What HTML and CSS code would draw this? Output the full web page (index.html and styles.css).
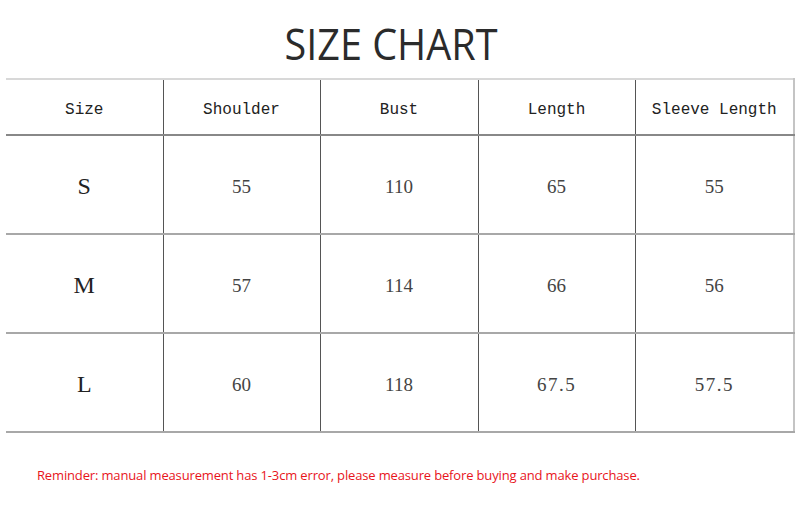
FILE: index.html
```html
<!DOCTYPE html>
<html>
<head>
<meta charset="utf-8">
<link rel="stylesheet" href="styles.css">
</head>
<body>
<div class="page">
  <h1 class="title">SIZE CHART</h1>
  <table class="chart">
    <colgroup>
      <col class="c1"><col class="c2"><col class="c3"><col class="c4"><col class="c5">
    </colgroup>
    <thead>
      <tr class="head">
        <th>Size</th><th>Shoulder</th><th>Bust</th><th>Length</th><th>Sleeve Length</th>
      </tr>
    </thead>
    <tbody>
      <tr class="row">
        <td class="sz">S</td><td>55</td><td>110</td><td>65</td><td>55</td>
      </tr>
      <tr class="row">
        <td class="sz">M</td><td>57</td><td>114</td><td>66</td><td>56</td>
      </tr>
      <tr class="row">
        <td class="sz">L</td><td>60</td><td>118</td><td class="dec">67.5</td><td class="dec">57.5</td>
      </tr>
    </tbody>
  </table>
  <p class="note">Reminder: manual measurement has 1-3cm error, please measure before buying and make purchase.</p>
</div>
</body>
</html>
```
FILE: styles.css
```css
html, body {
  margin: 0;
  padding: 0;
  background: #fff;
}
.page {
  width: 800px;
  height: 530px;
  padding: 20px 0 0 6px;
  box-sizing: border-box;
}
.title {
  margin: 0 0 0 -9px;
  width: 788px;
  height: 58px;
  text-align: center;
  font-family: "Open Sans", sans-serif;
  font-weight: 400;
  font-size: 43px;
  line-height: 48px;
  color: #2b2b2b;
  transform: scaleX(0.92);
}
.chart {
  border-collapse: collapse;
  table-layout: fixed;
  width: 788px;
}
.c1 { width: 157px; }
.c2 { width: 157px; }
.c3 { width: 158px; }
.c4 { width: 157px; }
.c5 { width: 159px; }
.chart th, .chart td {
  padding: 0;
  text-align: center;
  vertical-align: middle;
  border-top: 2px solid #b4b4b4;
  border-bottom: 2px solid #a8a8a8;
  border-left: 1px solid #555;
  color: #333;
}
.chart th:first-child, .chart td:first-child {
  border-left: none;
}
.chart th:last-child, .chart td:last-child {
  border-right: 2px solid #c4c4c4;
}
.head th {
  height: 48px;
  padding-top: 6px;
  font-family: "Liberation Mono", monospace;
  font-weight: 400;
  font-size: 16px;
  color: #222;
  border-top-color: #d8d8d8;
  border-bottom-color: #888;
}
.row td {
  height: 93px;
  padding-top: 4px;
  font-family: "Liberation Serif", serif;
  font-size: 19px;
  color: #444;
}
.row td.sz {
  font-size: 24px;
  color: #222;
}
.row td.dec {
  letter-spacing: 1.5px;
}
.note {
  margin: 33px 0 0 31px;
  font-family: "Open Sans", sans-serif;
  font-size: 13px;
  letter-spacing: -0.15px;
  line-height: 18px;
  color: #e8141b;
}
```
